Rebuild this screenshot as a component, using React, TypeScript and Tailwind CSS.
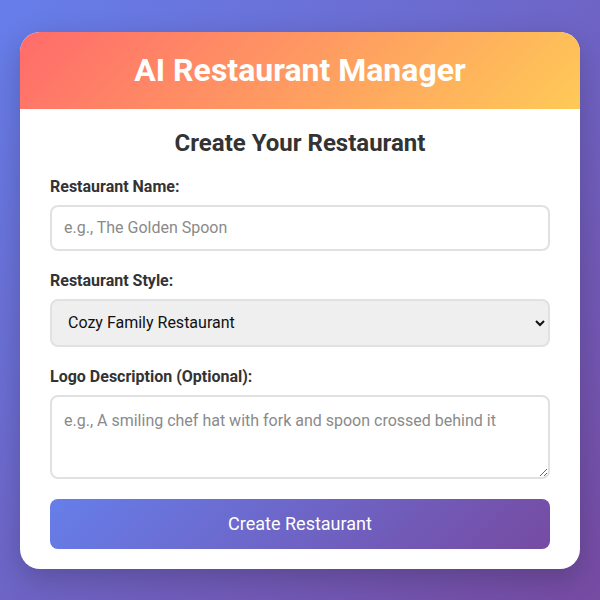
export default function App() {
    return (
        <div
            className="min-h-screen flex items-center justify-center px-5 bg-[linear-gradient(135deg,#667eea_0%,#764ba2_100%)]"
            style={{ fontFamily: 'Roboto, "Noto Sans", sans-serif' }}
        >
            <div className="w-full bg-white rounded-[20px] overflow-hidden shadow-[0_10px_30px_rgba(0,0,0,0.2)]">
                {/* Header */}
                <div className="h-[77px] flex items-center justify-center bg-[linear-gradient(135deg,#ff6b6b_0%,#feca57_100%)]">
                    <h1 className="text-[32px] font-bold text-white leading-none">AI Restaurant Manager</h1>
                </div>

                {/* Form */}
                <div className="px-[30px] pt-5 pb-5">
                    <h2 className="text-[24px] font-bold text-[#333] text-center leading-[28px] mb-5">
                        Create Your Restaurant
                    </h2>

                    <div className="mb-5">
                        <label className="block text-[16px] font-bold text-[#333] leading-[19px] mb-[9px]">
                            Restaurant Name:
                        </label>
                        <input
                            type="text"
                            placeholder="e.g., The Golden Spoon"
                            className="block w-full h-[46px] px-3 text-[16px] border-2 border-[#e1e1e1] rounded-lg placeholder:text-[#8a8a8a] outline-none"
                        />
                    </div>

                    <div className="mb-5">
                        <label className="block text-[16px] font-bold text-[#333] leading-[19px] mb-[9px]">
                            Restaurant Style:
                        </label>
                        <select
                            defaultValue="family"
                            className="block w-full h-[48px] px-3 text-[16px] text-[#111] bg-[#efefef] border-2 border-[#e1e1e1] rounded-lg outline-none"
                        >
                            <option value="family">Cozy Family Restaurant</option>
                            <option value="fine">Fine Dining</option>
                            <option value="cafe">Casual Café</option>
                        </select>
                    </div>

                    <div className="mb-5">
                        <label className="block text-[16px] font-bold text-[#333] leading-[19px] mb-[9px]">
                            Logo Description (Optional):
                        </label>
                        <textarea
                            placeholder="e.g., A smiling chef hat with fork and spoon crossed behind it"
                            className="block w-full h-[84px] p-3 text-[16px] border-2 border-[#e1e1e1] rounded-lg placeholder:text-[#8a8a8a] outline-none"
                        />
                    </div>

                    <button className="block w-full h-[50px] rounded-lg text-white text-[18px] bg-[linear-gradient(135deg,#667eea_0%,#764ba2_100%)]">
                        Create Restaurant
                    </button>
                </div>
            </div>
        </div>
    );
}
